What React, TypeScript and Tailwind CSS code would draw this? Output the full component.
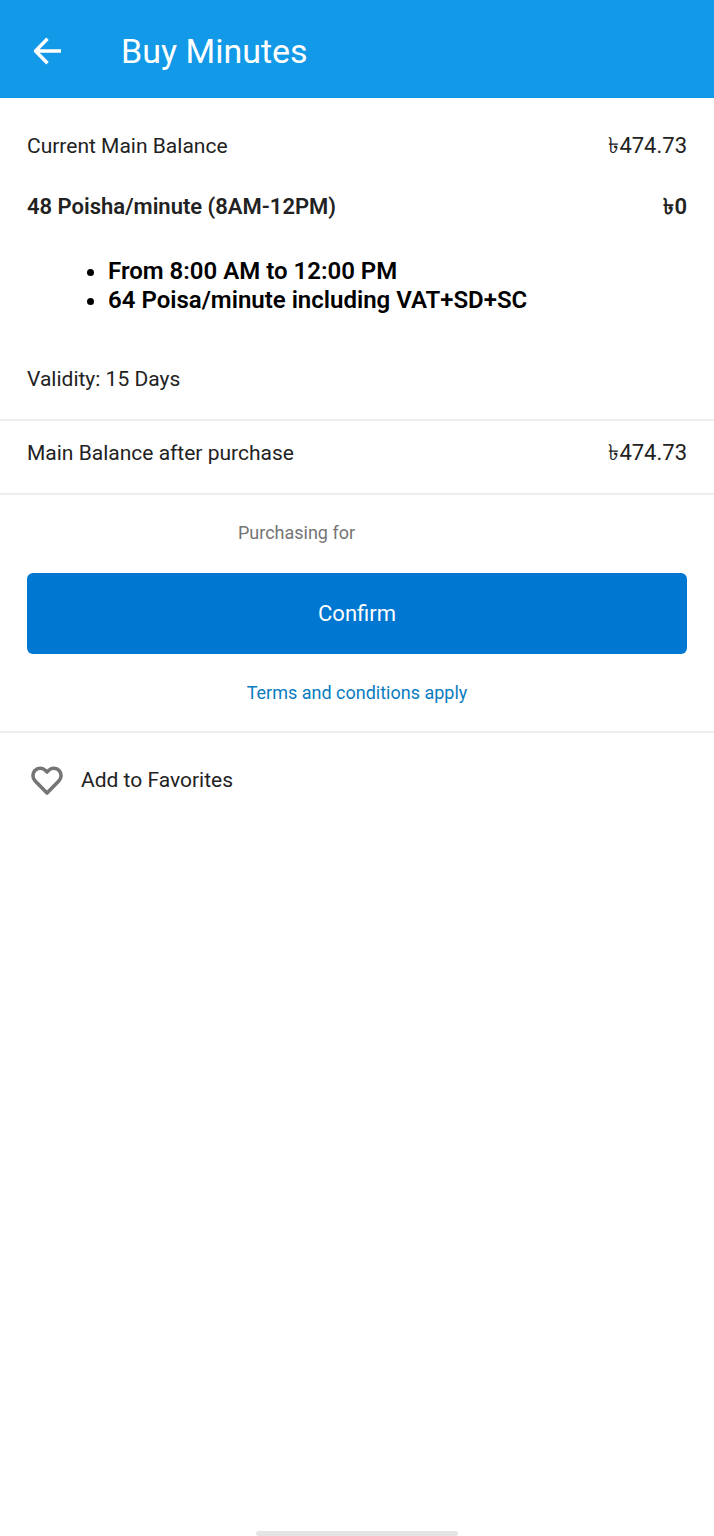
import React, { useState } from "react";

const offer = {
  name: "48 Poisha/minute (8AM-12PM)",
  price: "৳0",
  details: ["From 8:00 AM to 12:00 PM", "64 Poisa/minute including VAT+SD+SC"],
  validity: "15 Days",
};

function BackArrow() {
  return (
    <svg className="h-[30px] w-[30px]" viewBox="0 0 30 30" fill="none" stroke="currentColor" strokeWidth="3.4">
      <path d="M29 15H4M15.500 2.800L3.500 15l12 12.200" strokeLinejoin="round" />
    </svg>
  );
}

function Heart({ filled }: { filled: boolean }) {
  return (
    <svg
      className="h-8 w-[34px] text-[#757575]"
      viewBox="0 0 34 32"
      fill={filled ? "currentColor" : "none"}
      stroke="currentColor"
      strokeWidth="3.6"
      strokeLinejoin="round"
    >
      <path d="M17 28L5.200 16C2.300 13 2.200 8.400 4.900 5.500C7.700 2.500 12.100 2.600 14.900 5L17 7L19.100 5C21.900 2.600 26.300 2.500 29.100 5.500C31.800 8.400 31.700 13 28.800 16Z" />
    </svg>
  );
}

function Row({ label, value }: { label: string; value: string }) {
  return (
    <div className="flex items-center justify-between gap-4 leading-8">
      <span>{label}</span>
      <span className="text-[22px]">{value}</span>
    </div>
  );
}

export default function App() {
  const [favorite, setFavorite] = useState(false);

  return (
    <div className="flex flex-col min-h-screen bg-white text-[#222222] text-[21px] font-[Roboto,'Noto_Sans',sans-serif]">
      {/* Header */}
      <header className="flex items-center gap-[59px] px-8 pt-[31px] pb-[27px] bg-[#1299e7] text-white">
        <button type="button" aria-label="Back">
          <BackArrow />
        </button>
        <h1 className="text-[34px] leading-10">Buy Minutes</h1>
      </header>

      <main>
        {/* Offer */}
        <section className="px-[27px] pt-8 pb-6 border-b-2 border-[#eeeeee]">
          <Row label="Current Main Balance" value="৳474.73" />
          <div className="mt-[29px] text-[22px] font-semibold">
            <Row label={offer.name} value={offer.price} />
          </div>
          <ul className="list-disc pl-[81px] pt-[34px] pb-12 text-[24px] leading-[29px] font-semibold text-black">
            {offer.details.map((detail) => (
              <li key={detail}>{detail}</li>
            ))}
          </ul>
          <p className="leading-8">Validity: {offer.validity}</p>
        </section>

        <section className="px-[27px] pt-4 pb-6 border-b-2 border-[#eeeeee]">
          <Row label="Main Balance after purchase" value="৳474.73" />
        </section>

        {/* Purchase */}
        <section className="flex flex-col items-center px-[27px] py-6 border-b-2 border-[#eeeeee] text-[18px]">
          <p className="leading-7 pr-[121px] text-[#757575]">Purchasing for</p>
          <button type="button" className="w-full py-6 mt-[26px] rounded-md bg-[#0077d1] text-white text-[22px] leading-[33px]">
            Confirm
          </button>
          <a href="#terms" className="mt-[25px] leading-7 text-[#0a7cc0]">
            Terms and conditions apply
          </a>
        </section>

        <button
          type="button"
          aria-pressed={favorite}
          onClick={() => setFavorite(!favorite)}
          className="flex items-center gap-[17px] px-[30px] py-8"
        >
          <Heart filled={favorite} />
          Add to Favorites
        </button>
      </main>

      {/* Gesture bar */}
      <div className="mt-auto mx-auto h-[5px] w-[202px] rounded-full bg-[#e4e4e4]" />
    </div>
  );
}
